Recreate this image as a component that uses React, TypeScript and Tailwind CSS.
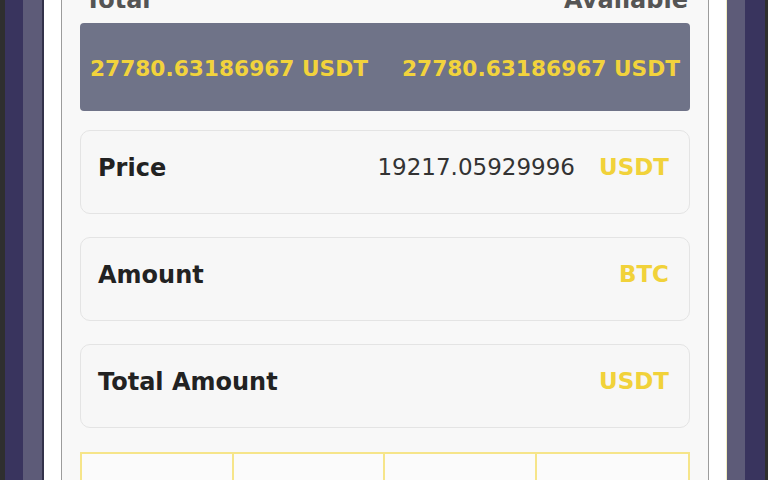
import React from 'react';

const font = { fontFamily: '"DejaVu Sans", Inter, sans-serif' };

function Field({ label, value, unit }: { label: string; value?: string; unit: string }) {
  return (
    <div className="shrink-0 h-[84px] rounded-[10px] border border-[#e4e4e4] bg-[#f7f7f7] flex items-center pl-[17px] pr-[20px] pb-[9px]">
      <span className="text-[24px] font-bold text-[#222]">{label}</span>
      <span className="ml-auto text-[23px] text-[#333]">{value}</span>
      <span className="ml-[24px] text-[23px] font-bold text-[#f1d23a]">{unit}</span>
    </div>
  );
}

export default function App() {
  return (
    <div className="w-[768px] h-[480px] overflow-hidden flex bg-[#f8f8f8]" style={font}>
      <div className="w-[5px] bg-[#2f2f2f]" />
      <div className="w-[18px] bg-[#39345e]" />
      <div className="w-[19px] bg-[#5d5b78]" />
      <div className="w-[2px] bg-[#33324a]" />
      <div className="w-[17px] bg-white" />
      <div className="w-px bg-[#9c9c9c]" />

      <div className="w-[646px] px-[18px] bg-[#f8f8f8] flex flex-col">
        <div className="shrink-0 -mt-[18px] h-[41px] flex items-start justify-between pl-[5px] pr-[2px] text-[24px] font-bold text-[#555]">
          <span>Total</span>
          <span>Available</span>
        </div>
        <div className="shrink-0 h-[88px] rounded-[4px] bg-[#6f7388] flex items-center justify-between px-[10px] pt-[4px] text-[21.7px] font-bold text-[#f2d33c]">
          <span>27780.63186967 USDT</span>
          <span>27780.63186967 USDT</span>
        </div>
        <div className="shrink-0 mt-[19px] flex flex-col gap-[23px]">
          <Field label="Price" value="19217.05929996" unit="USDT" />
          <Field label="Amount" unit="BTC" />
          <Field label="Total Amount" unit="USDT" />
        </div>
        <div className="shrink-0 mt-[24px] h-[60px] grid grid-cols-4 border-2 border-b-0 border-[#f6e58a]">
          <div className="border-r-2 border-[#f6e58a] bg-[#fbfbfb]" />
          <div className="border-r-2 border-[#f6e58a] bg-[#fbfbfb]" />
          <div className="border-r-2 border-[#f6e58a] bg-[#fbfbfb]" />
          <div className="bg-[#fbfbfb]" />
        </div>
      </div>

      <div className="w-px bg-[#9c9c9c]" />
      <div className="w-[17px] bg-white" />
      <div className="w-px bg-[#f3eec0]" />
      <div className="w-[18px] bg-[#5d5b78]" />
      <div className="w-[20px] bg-[#39345e]" />
      <div className="w-[3px] bg-[#2f2f2f]" />
    </div>
  );
}
